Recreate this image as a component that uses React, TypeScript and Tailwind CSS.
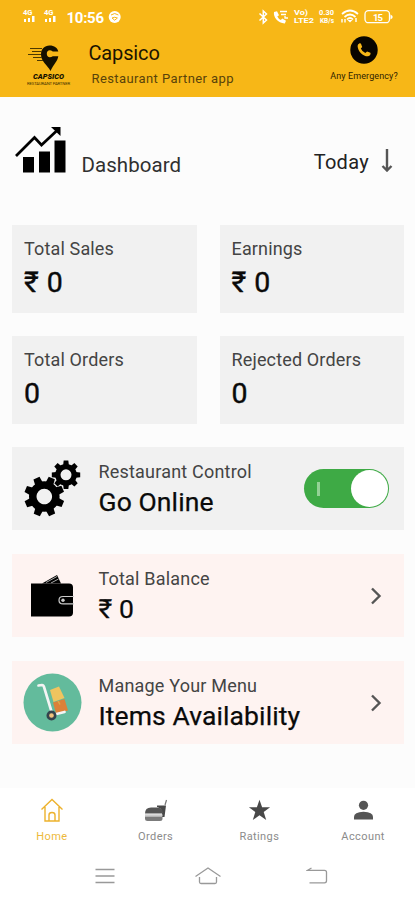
import type { ReactNode } from "react";

function StatusBar() {
  return (
    <svg
      className="block w-full h-[34px] font-['Roboto',sans-serif]"
      viewBox="0 0 415 34"
      fill="#fff"
    >
      {[23, 44].map((x) => (
        <g key={x}>
          <text x={x} y="14.5" fontSize="7.5" fontWeight="700">
            4G
          </text>
          <path d={`M${x + 1} 19h2v3h-2zM${x + 5} 18h2v4h-2zM${x + 9} 16h2.5v6h-2.5z`} />
        </g>
      ))}
      <text x="66.5" y="22.5" fontSize="15" fontWeight="700" textLength="37.5">
        10:56
      </text>
      <circle cx="114.7" cy="17" r="6" />
      <path d="M111 15q3.7-3 7.4 0M112 18q2.7-1.5 5.4 0l-2.7 2.2z" fill="none" stroke="#f7b717" />
      <path
        d="m259.500 13.500 7 6.500-3.200 3v-12l3.200 3-7 6.500"
        fill="none"
        stroke="#fff"
        strokeWidth="1.500"
      />
      <path d="m274 12 3-.8 2 4-1.700 1.300q1.200 2.500 3.500 3.500l1.500-1.500 3.700 2.300-1.200 2.600C278 23.500 273 17 274 12z" />
      <path d="M280 11.500h7M281 14.500h5M285 16v2h3" fill="none" stroke="#fff" strokeWidth="1.300" />
      <text x="294" y="14.800" fontSize="6.500" fontWeight="700" textLength="14" lengthAdjust="spacingAndGlyphs">
        Vo)
      </text>
      <text x="294" y="23.200" fontSize="6.500" fontWeight="700" textLength="20" lengthAdjust="spacingAndGlyphs">
        LTE2
      </text>
      <text x="319" y="14.800" fontSize="6.500" fontWeight="700" textLength="15" lengthAdjust="spacingAndGlyphs">
        0.30
      </text>
      <text x="320" y="23.200" fontSize="6.500" fontWeight="700" textLength="14">
        KB/s
      </text>
      <g fill="none" stroke="#fff" strokeWidth="1.700">
        <path d="M342 14q8-7 16 0M344.500 17q5.500-5 11 0M347 19.500q3-3 6 0" />
        <path d="M342 19v3.500M345 19v3.500M356 18v4" strokeWidth="1.400" />
      </g>
      <path d="m347.500 20 2.500 2.500 2.500-2.500z" />
      <rect x="365" y="10.700" width="24.500" height="12" rx="3.500" fill="none" stroke="#fff" strokeWidth="1.300" />
      <path d="M390.500 14.500 392.500 16v2l-2 1.500z" />
      <text x="373" y="20.500" fontSize="9.500" fontWeight="700" textLength="10">
        15
      </text>
    </svg>
  );
}

function Logo() {
  return (
    <svg className="w-[50px] h-[44px] font-['Roboto',sans-serif]" viewBox="0 0 50 44">
      <path
        d="M25.500 3.500c5 0 8 2.500 8.800 6h-5.500c-3.500-2.500-6-.5-6 2.200 0 3.500 3 4.500 6 2.500h5.500c-.8 5-4.300 7.500-7.800 14.800-3-6-9.500-9.500-9.500-16.500 0-5.500 3.500-9 8.500-9z"
        fill="#141000"
      />
      <path d="M6 6.500h12M8 9.500h10M4 12.500h13M9 15.500h9M13 18.500h6" stroke="#4d3900" strokeWidth="1.200" />
      <text x="9" y="37.200" fontSize="6.500" fontWeight="900" fontStyle="italic" textLength="31" lengthAdjust="spacingAndGlyphs" fill="#141000">
        CAPSICO
      </text>
      <text x="3" y="43" fontSize="4.200" textLength="43" fill="#3d2d00">
        RESTAURANT PARTNER
      </text>
    </svg>
  );
}

function Header() {
  return (
    <header className="h-[97px] bg-[#f7b717]">
      <StatusBar />
      <div className="flex h-[63px] items-start">
        <div className="pl-6 pt-2 shrink-0">
          <Logo />
        </div>
        <div className="pl-[14.5px] pt-[9px] whitespace-nowrap">
          <h1 className="text-[20px] leading-none tracking-[-0.15px] text-[#1c1400]">Capsico</h1>
          <p className="pt-[9px] pl-[3px] text-[13px] leading-none tracking-[0.4px] text-[#59430a]">
            Restaurant Partner app
          </p>
        </div>
        <div className="ml-auto mr-4 pt-[2px] w-[70px] flex flex-col items-center">
          <svg className="w-7 h-7" viewBox="0 0 28 28">
            <circle cx="14" cy="14" r="13.700" fill="#080500" />
            <path
              d="M9.500 7.300q-2 1-1.900 2.600c.3 5.500 5.500 10.600 10.500 10.400q2-.2 2.500-2.200l-.2-1.300-3.300-1.300-1.800 1.500q-3.200-1.300-4.500-4.400l1.400-1.700-1.300-3.400z"
              fill="#f7b717"
            />
          </svg>
          <span className="pt-[8px] text-[9px] leading-none tracking-[0.1px] whitespace-nowrap text-[#2e2100]">
            Any Emergency?
          </span>
        </div>
      </div>
    </header>
  );
}

function StatCard({ label, value }: { label: string; value: string }) {
  return (
    <div className="h-[88px] bg-[#f1f1f1] pl-[12px] pt-[15px]">
      <div className="text-[18px] leading-none tracking-[0.15px] text-[#444]">{label}</div>
      <div className="pt-[11px] text-[28.5px] leading-none [word-spacing:1px] text-[#0a0a0a] [-webkit-text-stroke:0.4px_#0a0a0a]">
        {value}
      </div>
    </div>
  );
}

function RowCard({
  icon,
  label,
  value,
  color,
  children,
}: {
  icon: ReactNode;
  label: string;
  value: string;
  color: string;
  children: ReactNode;
}) {
  return (
    <div className={`h-[83px] flex items-center ${color}`}>
      <div className="w-[86px] shrink-0 pl-[10px]">{icon}</div>
      <div className="flex-1 h-full pl-[0.5px] pt-[16px] whitespace-nowrap">
        <div className="text-[18px] leading-none tracking-[0.2px] text-[#444]">{label}</div>
        <div className="pt-[8px] text-[26.5px] leading-none tracking-[0.1px] text-[#0a0a0a] [-webkit-text-stroke:0.25px_#0a0a0a]">
          {value}
        </div>
      </div>
      {children}
    </div>
  );
}

function Gear({ x, y, r, turn }: { x: number; y: number; r: number; turn: number }) {
  return (
    <g transform={`translate(${x} ${y}) rotate(${turn}) scale(${r / 20})`}>
      <circle r="11.500" fill="none" stroke="#000" strokeWidth="7.500" />
      {[0, 45, 90, 135, 180, 225, 270, 315].map((a) => (
        <path key={a} d="M-4-13.500-3.300-20h6.600L4-13.500z" transform={`rotate(${a})`} />
      ))}
    </g>
  );
}

function GearsIcon() {
  return (
    <svg className="w-[62px] h-[62px]" viewBox="0 0 62 62">
      <Gear x={22.3} y={38.5} r={20} turn={22} />
      <Gear x={44} y={16.8} r={14.2} turn={0} />
    </svg>
  );
}

function WalletIcon() {
  return (
    <svg className="w-[62px] h-[62px]" viewBox="0 0 62 62">
      <path d="M20 18.500 35 10l4 8.500z" />
      <path d="m24 17.500 11-6M29 18l7.500-4" stroke="#aaa" strokeWidth="1" />
      <path d="M9 18.500h38q4 0 4 4v25q0 4-4 4H9z" />
      <path d="M52 31.500H41q-4 0-4 3.700t4 3.700h11" fill="none" stroke="#ccc" strokeWidth="1.200" />
      <circle cx="41" cy="35.200" r="1.700" fill="#ccc" />
    </svg>
  );
}

function TrolleyIcon() {
  return (
    <svg className="w-[62px] h-[62px]" viewBox="0 0 62 62">
      <circle cx="30.500" cy="30.500" r="29" fill="#63bb9c" />
      <path d="m28 18 9-3.500L42.500 26l-11 4z" fill="#efc45f" />
      <path d="m31 30.500 11.500-3.500 3.500 11.500-12 3z" fill="#dc8138" />
      <path d="m36 29 2 3.500" stroke="#dda94a" strokeWidth="1.500" />
      <path
        d="M16.500 13.500l3.500-.5q1.500 0 2 2l8.500 28 12-3"
        fill="none"
        stroke="#f4f4f4"
        strokeWidth="2.700"
        strokeLinecap="round"
      />
      <circle cx="29.500" cy="43.500" r="3.700" fill="#f1c27c" stroke="#34434c" strokeWidth="2.700" />
    </svg>
  );
}

function Chevron() {
  return (
    <svg className="w-3 h-5 mr-[22.5px]" viewBox="0 0 12 20">
      <path d="m2 2.500 7.500 7.500L2 17.500" fill="none" stroke="#555" strokeWidth="2.400" />
    </svg>
  );
}

const tabs = [
  {
    name: "Home",
    color: "text-[#edb93b]",
    icon: (
      <path
        d="m1.500 12.500 10.500-10 10.500 10M5 10v14h14V10M9 24v-6q0-2.500 3-2.500t3 2.500v6"
        fill="none"
        stroke="#edb22d"
        strokeWidth="1.400"
      />
    ),
  },
  {
    name: "Orders",
    color: "text-[#8b8b8b]",
    icon: (
      <>
        <path d="M13 8.500h9L20.500 20H18v-6q-1-3-5-4z" fill="#484848" />
        <path d="m21 8 1.500-5" stroke="#777" strokeWidth="1.200" />
        <path d="M1 16.500q0-6 6-6h6q6 0 6 6z" fill="#555" />
        <path d="M1 18.300h17.500" stroke="#ccc" strokeWidth="2" />
        <path d="M1 19.500h17.500v2q0 2.500-2.500 2.500H3.500Q1 24 1 21.500z" fill="#7b7b7b" />
      </>
    ),
  },
  {
    name: "Ratings",
    color: "text-[#8b8b8b]",
    icon: (
      <path
        d="m12.500 2.700 2.600 7.600h8l-6.400 4.800 2.500 7.900-6.700-4.800L5.800 23l2.500-7.900-6.400-4.800h8z"
        fill="#484848"
      />
    ),
  },
  {
    name: "Account",
    color: "text-[#8b8b8b]",
    icon: (
      <>
        <circle cx="12.500" cy="8.300" r="4.600" fill="#555" />
        <path d="M3 22.500v-2.800q0-4.500 9.500-5 9.500.5 9.500 5v2.800z" fill="#555" />
      </>
    ),
  },
];

export default function App() {
  return (
    <div className="w-[415px] h-[900px] bg-[#fcfcfc] overflow-hidden flex flex-col font-['Roboto',sans-serif]">
      <Header />

      <main className="h-[691px] pl-[12px] pr-[11px]">
        <div className="h-[128px] flex whitespace-nowrap">
          <svg className="w-[56px] h-[50px] mt-[28px]" viewBox="0 0 56 50">
            <path d="M11 32h11v15.500H11zM27 26.500h11v21H27zM42.500 15.500h11v32h-11z" />
            <path d="M4 31 22.500 12.500l7 7.500L45 5.500" fill="none" stroke="#000" strokeWidth="2.700" />
            <path d="M39 2h9.500v9z" />
          </svg>
          <h2 className="pl-[13.5px] pt-[58px] text-[20.5px] leading-none tracking-[0.05px] text-[#303030]">
            Dashboard
          </h2>
          <div className="ml-auto mr-[11px] flex">
            <span className="pt-[55px] text-[20px] leading-none tracking-[0.3px] text-[#222]">
              Today
            </span>
            <svg className="w-3 h-6 ml-3 mt-[51px]" viewBox="0 0 12 24">
              <path d="M6 1v21M1.500 18 6 22.500l4.500-4.500" fill="none" stroke="#555" strokeWidth="2.400" />
            </svg>
          </div>
        </div>

        <div className="grid grid-cols-2 gap-x-[23px] gap-y-[23px]">
          <StatCard label="Total Sales" value="₹ 0" />
          <StatCard label="Earnings" value="₹ 0" />
          <StatCard label="Total Orders" value="0" />
          <StatCard label="Rejected Orders" value="0" />
        </div>

        <div className="flex flex-col gap-6 pt-[23px]">
          <RowCard
            icon={<GearsIcon />}
            label="Restaurant Control"
            value="Go Online"
            color="bg-[#f1f1f1]"
          >
            <div className="w-[85px] h-[39px] mr-[15px] rounded-full bg-[#3eaa45] flex items-center justify-between pl-[13px] pr-[1px]">
              <span className="w-[3px] h-[14px] bg-[#94d295]" />
              <span className="size-[37px] rounded-full bg-white" />
            </div>
          </RowCard>
          <RowCard icon={<WalletIcon />} label="Total Balance" value="₹ 0" color="bg-[#fef3f1]">
            <Chevron />
          </RowCard>
          <RowCard
            icon={<TrolleyIcon />}
            label="Manage Your Menu"
            value="Items Availability"
            color="bg-[#fef3f1]"
          >
            <Chevron />
          </RowCard>
        </div>
      </main>

      <footer className="flex-1 bg-white">
        <nav className="grid grid-cols-4 h-[70px] pt-[9px]">
          {tabs.map((tab) => (
            <div key={tab.name} className={`flex flex-col items-center ${tab.color}`}>
              <svg className="w-6 h-[26px]" viewBox="0 0 24 26">
                {tab.icon}
              </svg>
              <span className="pt-[8px] text-[11px] leading-none tracking-[0.4px]">{tab.name}</span>
            </div>
          ))}
        </nav>
        <div className="flex justify-between pl-[95px] pr-[87px]">
          <svg className="w-5 h-6 mt-[6px]" viewBox="0 0 20 24">
            <path d="M.5 5.500h19M.5 12h19M.5 18.500h19" stroke="#999" strokeWidth="1.300" />
          </svg>
          <svg className="w-7 h-6 mt-[6px] -ml-[6px]" viewBox="0 0 28 24">
            <path
              d="M1.500 12.500 14 4l12.500 8.500M5.500 13v5q0 1.500 1.500 1.500h14q1.500 0 1.500-1.500v-5"
              fill="none"
              stroke="#999"
              strokeWidth="1.300"
            />
          </svg>
          <svg className="w-[22px] h-6 mt-[7px]" viewBox="0 0 22 24">
            <path
              d="M5.500 3 1.500 5.300h17q2 0 2 2v8.500q0 2-2 2h-15"
              fill="none"
              stroke="#999"
              strokeWidth="1.300"
            />
          </svg>
        </div>
      </footer>
    </div>
  );
}
